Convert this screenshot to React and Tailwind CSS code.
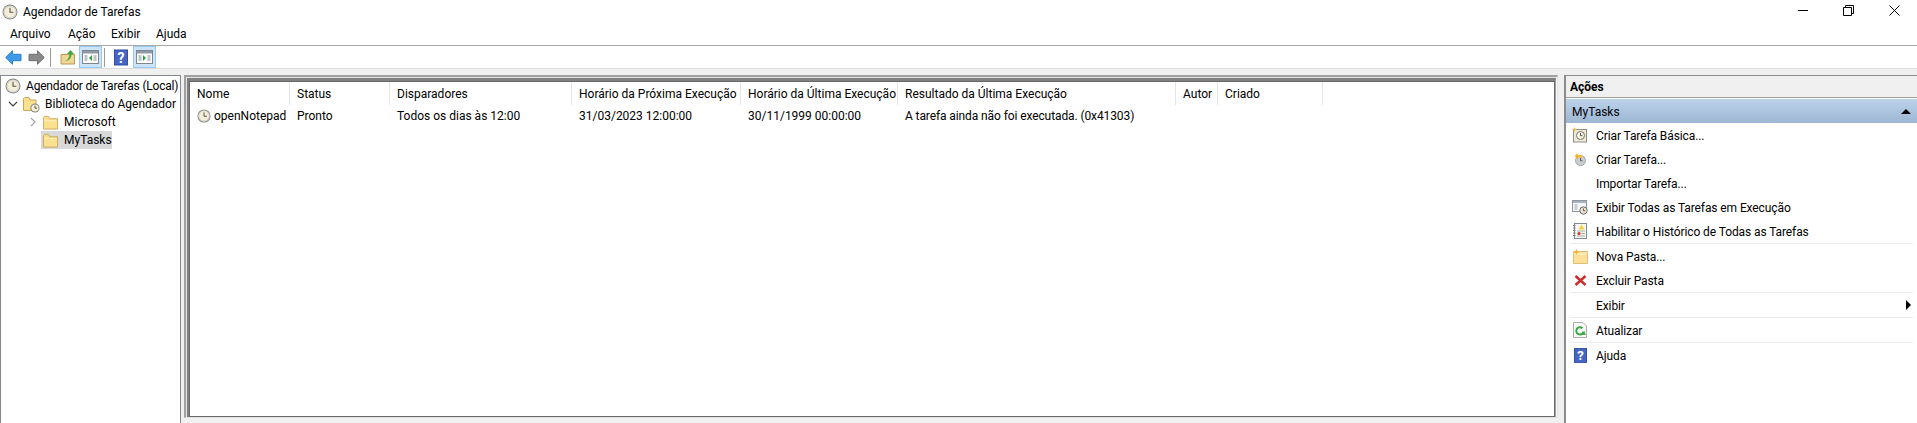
const font = { fontFamily: 'Roboto, sans-serif' };

const Clock = ({ size = 16 }) => (
  <svg width={size} height={size} viewBox="0 0 16 16" className="shrink-0">
    <circle cx="8" cy="8" r="7.5" fill="#85857f" />
    <circle cx="8" cy="8" r="6.6" fill="#d9d8d2" />
    <circle cx="8" cy="8" r="5.2" fill="#f5efd8" />
    <path d="M8 3.8v4.5h3.4" fill="none" stroke="#55554f" strokeWidth="1.1" />
  </svg>
);

const Folder = ({ size = 16 }) => (
  <svg width={size} height={size} viewBox="0 0 16 16" className="shrink-0">
    <path d="M.5 2.5V15H15.5V4H7L6 1.5H1.5Z" fill="#fbe08f" stroke="#c9a95c" />
    <path d="M1.5 6H14.5" stroke="#fff3c4" />
  </svg>
);

const LibraryIcon = () => (
  <svg width={17} height={17} viewBox="0 0 17 17" className="shrink-0">
    <path d="M.5 2.5V14.5H13V4H7L6 1.5H1.5Z" fill="#fbe08f" stroke="#c9a95c" />
    <circle cx="12" cy="12" r="4.6" fill="#85857f" />
    <circle cx="12" cy="12" r="3.6" fill="#f5efd8" />
    <path d="M12 9.6v2.6h2.1" fill="none" stroke="#44443f" strokeWidth="0.9" />
  </svg>
);

const Arrow = ({ fill, stroke, flip }) => (
  <svg width={17} height={15} viewBox="0 0 17 15" className={flip ? "shrink-0 -scale-x-100" : "shrink-0"}>
    <path d="M.7 7.5 7.5.8V4.3H16V10.7H7.5V14.2Z" fill={fill} stroke={stroke} />
  </svg>
);

const HelpIcon = ({ w = 14, h = 16 }) => (
  <svg width={w} height={h} viewBox="0 0 14 16" className="shrink-0">
    <rect x="0" y="0" width="14" height="16" fill="#2f4fa8" />
    <rect x="1" y="1" width="12" height="14" fill="#4766c4" />
    <text x="7" y="13" textAnchor="middle" fontSize="14" fontWeight="700" fill="#fff" style={font}>?</text>
  </svg>
);

const PaneIcon = ({ side }) => (
  <svg width={17} height={14} viewBox="0 0 17 14" className="shrink-0">
    <rect x=".5" y=".5" width="16" height="13" fill="#fff" stroke="#7c8792" />
    <rect x="1" y="1" width="15" height="2.5" fill="#8f9aa5" />
    <path d="M2.5 6h3M2.5 8h3M2.5 10h3M11.5 6h3M11.5 8h3M11.5 10h3" stroke="#7f8a95" />
    {side === "left" ? (
      <path d="M10 5v6L7 8Z" fill="#2f9e3c" />
    ) : (
      <path d="M7 5v6L10 8Z" fill="#2f9e3c" />
    )}
  </svg>
);

const BasicTaskIcon = () => (
  <svg width={16} height={16} viewBox="0 0 16 16">
    <rect x="1.5" y="2.5" width="13" height="12.5" fill="#efe9da" stroke="#8f8f88" />
    <circle cx="8.5" cy="8.5" r="4" fill="#fbf7e6" stroke="#77736a" />
    <path d="M8.5 6v2.7h2" fill="none" stroke="#55514a" />
    <path d="M2.5 0 3.3 1.7 5 2.5 3.3 3.3 2.5 5 1.7 3.3 0 2.5 1.7 1.7Z" fill="#f2b63a" />
  </svg>
);

const NewTaskIcon = () => (
  <svg width={16} height={16} viewBox="0 0 16 16">
    <circle cx="8.5" cy="9.5" r="5" fill="#c9ccd0" stroke="#a4a7aa" />
    <path d="M8.5 7v2.7h2" fill="none" stroke="#5b5e61" />
    <path d="M5 2 6 4.2 8.5 5 6 6 5 8.5 4 6 2 5 4 4.2Z" fill="#f0a92a" />
    <path d="M6 4h4v3H7Z" fill="#f6bb3f" />
  </svg>
);

const RunningIcon = () => (
  <svg width={16} height={16} viewBox="0 0 16 16">
    <rect x=".5" y="1.5" width="14" height="11" fill="#f6f7f9" stroke="#8d96a0" />
    <rect x="1" y="2" width="13" height="2" fill="#a9b2bd" />
    <path d="M2.5 6h3M2.5 8h3M2.5 10h3" stroke="#9aa3ad" />
    <circle cx="11.5" cy="11.5" r="3.7" fill="#e7e3d3" stroke="#6f6f68" />
    <path d="M11.5 9.5v2.2h1.6" fill="none" stroke="#4f4f49" strokeWidth=".9" />
  </svg>
);

const HistoryIcon = () => (
  <svg width={15} height={16} viewBox="0 0 15 16">
    <rect x="1.5" y=".5" width="12" height="15" fill="#f7f6ef" stroke="#7f8a94" />
    <path d="M0 2.5h2.5M0 5h2.5M0 7.5h2.5M0 10h2.5M0 12.5h2.5" stroke="#6f7a84" />
    <path d="M8.5 1.5 11.5 6.5H5.5Z" fill="#f5d33d" />
    <circle cx="6" cy="10.5" r="1.6" fill="#d62f2f" />
    <path d="M8.5 10.5H12M4 13H12M4 8H12" stroke="#a5aeb7" />
  </svg>
);

const NewFolderIcon = () => (
  <svg width={15} height={15} viewBox="0 0 15 15">
    <path d="M.5 2.5H14.5V14.5H.5Z" fill="#fbdf9a" stroke="#e0c072" />
    <path d="M1 5H14" stroke="#fff5d2" />
    <path d="M3.5 0 4.4 2 6.5 3 4.4 4 3.5 6 2.6 4 .5 3 2.6 2Z" fill="#f3b42e" />
  </svg>
);

const DeleteIcon = () => (
  <svg width={13} height={11} viewBox="0 0 13 11">
    <path d="M1.5 1 11.5 10M11.5 1 1.5 10" stroke="#cf2b2b" strokeWidth="2.4" />
  </svg>
);

const RefreshIcon = () => (
  <svg width={14} height={16} viewBox="0 0 14 16">
    <path d="M.5.5H10L13.5 4V15.5H.5Z" fill="#f7f8f7" stroke="#a9adaa" />
    <path d="M10.4 9.6A3.6 3.6 0 1 1 9.4 6.3" fill="none" stroke="#36a83f" strokeWidth="1.9" />
    <path d="M8 12.8 12.6 13 11.5 9Z" fill="#36a83f" />
  </svg>
);

const WindowControls = () => (
  <div className="flex items-center h-[21px] self-start">
    <div className="w-[45px] flex items-center justify-center">
      <div className="w-[10px] h-px bg-black" />
    </div>
    <div className="w-[46px] flex items-center justify-center">
      <svg width={11} height={11} viewBox="0 0 11 11">
        <path d="M.5 2.5h8v8h-8ZM2.5 2.5v-2h8v8h-2" fill="none" stroke="#000" />
      </svg>
    </div>
    <div className="w-[46px] flex items-center justify-center">
      <svg width={11} height={11} viewBox="0 0 11 11">
        <path d="M.5.5l10 10M10.5.5l-10 10" stroke="#000" />
      </svg>
    </div>
  </div>
);

const columns = [
  { label: "Nome", w: "w-[100px]" },
  { label: "Status", w: "w-[100px]" },
  { label: "Disparadores", w: "w-[182px]" },
  { label: "Horário da Próxima Execução", w: "w-[169px]" },
  { label: "Horário da Última Execução", w: "w-[157px]" },
  { label: "Resultado da Última Execução", w: "w-[278px]" },
  { label: "Autor", w: "w-[42px]" },
  { label: "Criado", w: "w-[105px]" },
];

const ActionRow = ({ icon, label, arrow }) => (
  <div className="flex items-center h-6 relative">
    <div className="w-[30px] pr-[2px] flex items-center justify-center shrink-0">{icon}</div>
    <span className="pt-px tracking-[-0.1px]">{label}</span>
    {arrow && (
      <div className="absolute right-[6px] w-0 h-0 border-y-[5px] border-y-transparent border-l-[5px] border-l-black" />
    )}
  </div>
);

const Sep = () => <div className="h-px bg-[#ececec] ml-1 mr-1" />;

export default function App() {
  return (
    <div style={font} className="w-[1917px] h-[423px] bg-white text-[12px] leading-4 text-black overflow-hidden flex flex-col">
      {/* barra de titulo */}
      <div className="h-[23px] flex items-center justify-between shrink-0">
        <div className="flex items-center pl-[2px] gap-[5px]">
          <Clock size={16} />
          <span>Agendador de Tarefas</span>
        </div>
        <WindowControls />
      </div>

      {/* menu */}
      <div className="h-[22px] flex items-center pl-[10px] shrink-0">
        <span className="w-[58px]">Arquivo</span>
        <span className="w-[43px]">Ação</span>
        <span className="w-[45px]">Exibir</span>
        <span>Ajuda</span>
      </div>

      {/* toolbar */}
      <div className="h-[24px] border-t border-[#a9a9a9] border-b border-b-[#dcdcdc] flex items-center pl-[5px] shrink-0">
        <Arrow fill="#3f9be8" stroke="#2a7fd0" />
        <div className="w-[6px]" />
        <Arrow fill="#8a8a8a" stroke="#6f6f6f" flip />
        <div className="w-px h-[19px] bg-[#9a9a9a] ml-[5px]" />
        <div className="ml-[9px] w-[16px] flex justify-center">
          <svg width={16} height={16} viewBox="0 0 16 16">
            <path d="M1 5.5H14.5V15H1Z" fill="#f0d692" stroke="#b79a55" />
            <path d="M5 12C8 11 9.5 8 9.5 5H7L10.5 1 14 5H11.5C11.5 9 9 12 5 12Z" fill="#36ac3e" />
          </svg>
        </div>
        <div className="ml-[3px] w-[23px] h-[22px] bg-[#cce4f7] border border-[#99c9ef] flex items-center justify-center">
          <PaneIcon side="left" />
        </div>
        <div className="w-px h-[19px] bg-[#9a9a9a] ml-[2px]" />
        <div className="ml-[9px]">
          <HelpIcon w={14} h={17} />
        </div>
        <div className="ml-[5px] w-[23px] h-[22px] bg-[#cce4f7] border border-[#99c9ef] flex items-center justify-center">
          <PaneIcon side="right" />
        </div>
      </div>

      {/* paineis */}
      <div className="flex-1 flex bg-[#f0f0f0] pt-[6px] min-h-0">
        {/* arvore */}
        <div className="w-[181px] shrink-0 bg-white border-l border-t border-r border-[#828790] pt-[1px] overflow-hidden whitespace-nowrap">
          <div className="h-[18px] flex items-center pl-1 gap-[5px]">
            <Clock size={16} />
            <span className="tracking-[-0.2px]">Agendador de Tarefas (Local)</span>
          </div>
          <div className="h-[18px] flex items-center pl-[7px]">
            <svg width={10} height={10} viewBox="0 0 10 10" className="mr-[5px] shrink-0">
              <path d="M1 3 5 7 9 3" fill="none" stroke="#404040" strokeWidth="1.2" />
            </svg>
            <LibraryIcon />
            <span className="ml-[5px]">Biblioteca do Agendador</span>
          </div>
          <div className="h-[18px] flex items-center pl-[27px]">
            <svg width={10} height={10} viewBox="0 0 10 10" className="mr-[5px] shrink-0">
              <path d="M3 1 7 5 3 9" fill="none" stroke="#a6a6a6" strokeWidth="1.2" />
            </svg>
            <Folder size={15} />
            <span className="ml-[6px]">Microsoft</span>
          </div>
          <div className="h-[18px] flex items-center ml-[40px] pl-[2px] w-[71px] bg-[#d9d9d9]">
            <Folder size={15} />
            <span className="ml-[6px]">MyTasks</span>
          </div>
        </div>

        {/* lista de tarefas */}
        <div className="ml-[3px] w-[1374px] shrink-0 h-[343px] border-l-2 border-t-2 border-[#a0a0a0] border-r border-r-[#e3e3e3] border-b border-b-[#e3e3e3]">
          <div className="h-full border-l border-t border-[#e2e2e2] border-r border-r-[#f8f8f8]">
            <div className="h-full border-l-2 border-t-[3px] border-[#808080] border-r border-r-[#a0a0a0]">
              <div className="h-full bg-white border border-[#696969] overflow-hidden whitespace-nowrap">
                <div className="flex h-[23px]">
                  {columns.map((c) => (
                    <div key={c.label} className={`${c.w} pl-[7px] flex items-center border-r border-[#e5e5e5] shrink-0`}>
                      {c.label}
                    </div>
                  ))}
                </div>
                <div className="flex h-[21px] items-center">
                  <div className="w-[100px] pl-[7px] flex items-center gap-[3px]">
                    <Clock size={14} />
                    <span>openNotepad</span>
                  </div>
                  <div className="w-[100px] pl-[7px]">Pronto</div>
                  <div className="w-[182px] pl-[7px]">Todos os dias às 12:00</div>
                  <div className="w-[169px] pl-[7px]">31/03/2023 12:00:00</div>
                  <div className="w-[157px] pl-[7px]">30/11/1999 00:00:00</div>
                  <div className="pl-[7px] tracking-[-0.1px]">A tarefa ainda não foi executada. (0x41303)</div>
                </div>
              </div>
            </div>
          </div>
        </div>

        {/* acoes */}
        <div className="ml-[6px] flex-1 bg-white border-l-2 border-t border-[#8c8c8c] whitespace-nowrap">
          <div className="h-[22px] bg-[#f0f0f0] border-b border-[#a0a0a0] flex items-center pl-1 pt-px font-bold">
            Ações
          </div>
          <div className="mt-px h-[24px] bg-gradient-to-b from-[#bcd3ea] to-[#9db6d3] flex items-center justify-between pl-[6px] pr-[6px]">
            <span className="pt-px">MyTasks</span>
            <div className="w-0 h-0 border-x-[5px] border-x-transparent border-b-[5px] border-b-black" />
          </div>
          <ActionRow icon={<BasicTaskIcon />} label="Criar Tarefa Básica..." />
          <ActionRow icon={<NewTaskIcon />} label="Criar Tarefa..." />
          <ActionRow label="Importar Tarefa..." />
          <ActionRow icon={<RunningIcon />} label="Exibir Todas as Tarefas em Execução" />
          <ActionRow icon={<HistoryIcon />} label="Habilitar o Histórico de Todas as Tarefas" />
          <Sep />
          <ActionRow icon={<NewFolderIcon />} label="Nova Pasta..." />
          <ActionRow icon={<DeleteIcon />} label="Excluir Pasta" />
          <Sep />
          <ActionRow label="Exibir" arrow />
          <Sep />
          <ActionRow icon={<RefreshIcon />} label="Atualizar" />
          <Sep />
          <ActionRow icon={<HelpIcon w={13} h={15} />} label="Ajuda" />
        </div>
      </div>
    </div>
  );
}
